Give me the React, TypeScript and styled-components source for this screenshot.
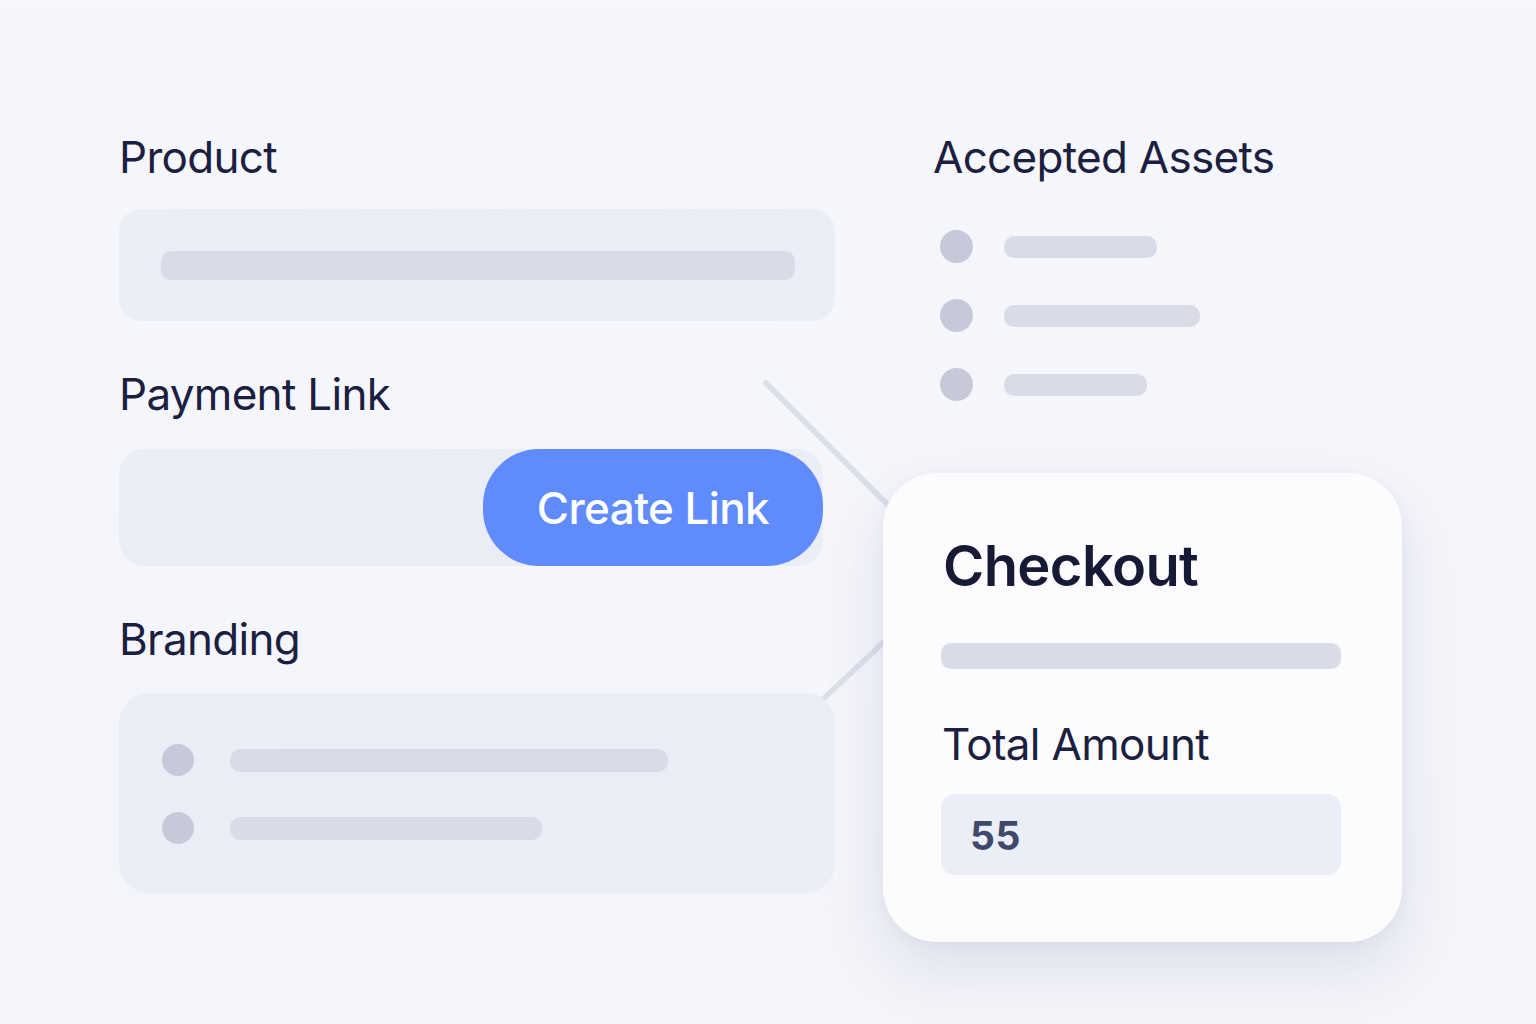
import React from "react";
import styled, { createGlobalStyle } from "styled-components";

const GlobalStyle = createGlobalStyle`
  html, body { margin: 0; padding: 0; background: #f5f6fb; }
  * { box-sizing: border-box; }
`;

const Page = styled.div`
  position: relative;
  width: 1536px;
  height: 1024px;
  overflow: hidden;
  background: linear-gradient(180deg, #f6f7fc 0%, #f4f5fa 100%);
  font-family: Inter, "Noto Sans", sans-serif;
  color: #1c2040;
  display: flex;
  align-items: flex-start;
  gap: 48px;
  padding: 135px 0 0 119px;
`;

const Connectors = styled.svg`
  position: absolute;
  inset: 0;
  width: 1536px;
  height: 1024px;
  z-index: 0;
  pointer-events: none;
`;

const Column = styled.div<{ $width: number }>`
  position: relative;
  z-index: 1;
  width: ${(p) => p.$width}px;
  display: flex;
  flex-direction: column;
`;

const Section = styled.section`
  display: flex;
  flex-direction: column;
  & + & { margin-top: 51px; }
`;

const Label = styled.h2<{ $indent?: number; $below?: number }>`
  margin: 0 0 ${(p) => p.$below ?? 30}px ${(p) => p.$indent ?? 0}px;
  font-size: 44px;
  line-height: 44px;
  font-weight: 400;
  letter-spacing: -0.7px;
  color: #1c2040;
`;

const Field = styled.div<{ $height: number; $radius: number }>`
  height: ${(p) => p.$height}px;
  border-radius: ${(p) => p.$radius}px;
  background: linear-gradient(135deg, #eceef7 0%, #eaecf6 60%, #eceef7 100%);
`;

const ProductField = styled(Field)`
  display: flex;
  align-items: center;
  padding: 0 40px 0 42px;
`;

const Bar = styled.div<{ $width?: number; $height: number }>`
  width: ${(p) => (p.$width ? `${p.$width}px` : "100%")};
  height: ${(p) => p.$height}px;
  border-radius: ${(p) => Math.min(p.$height / 2, 10)}px;
  background: #d9dce7;
  flex-shrink: 0;
`;

const LinkRow = styled(Field)`
  width: 704px;
  display: flex;
  justify-content: flex-end;
`;

const CreateButton = styled.button`
  width: 340px;
  height: 117px;
  border: none;
  border-radius: 56px;
  background: #5f8bfc;
  color: #ffffff;
  font-family: Inter, "Noto Sans", sans-serif;
  font-size: 44px;
  font-weight: 500;
  letter-spacing: -0.6px;
  cursor: pointer;
`;

const BrandingField = styled(Field)`
  display: flex;
  flex-direction: column;
  justify-content: center;
  gap: 36px;
  padding: 2px 0 0 43px;
`;

const ListRow = styled.div<{ $gap: number }>`
  display: flex;
  align-items: center;
  gap: ${(p) => p.$gap}px;
`;

const Dot = styled.span<{ $size: number }>`
  width: ${(p) => p.$size}px;
  height: ${(p) => p.$size}px;
  border-radius: 50%;
  background: #c6c9d8;
  flex-shrink: 0;
`;

const AssetList = styled.div`
  display: flex;
  flex-direction: column;
  gap: 36px;
  margin: 21px 0 0 57px;
`;

const CheckoutCard = styled.div`
  margin-top: 72px;
  width: 519px;
  height: 469px;
  border-radius: 54px;
  background: #fcfcfe;
  box-shadow: 0 26px 60px rgba(70, 80, 140, 0.13), 0 4px 14px rgba(70, 80, 140, 0.05);
  padding: 64px 61px 0 58px;
  display: flex;
  flex-direction: column;
`;

const CardTitle = styled.h1`
  margin: 0 0 48px 2px;
  font-size: 56px;
  line-height: 58px;
  font-weight: 600;
  letter-spacing: -0.6px;
  color: #161a36;
`;

const CardLabel = styled.div`
  margin: 53px 0 28px 1px;
  font-size: 44px;
  line-height: 44px;
  font-weight: 400;
  letter-spacing: -0.7px;
  color: #1c2040;
`;

const AmountBox = styled.div`
  height: 81px;
  border-radius: 14px;
  background: #eceef7;
  display: flex;
  align-items: center;
  padding: 2px 0 0 29px;
  font-size: 39px;
  font-weight: 700;
  color: #3e4a6b;
  letter-spacing: 0.5px;
`;

const assets = [153, 196, 143];
const brandRows = [438, 312];

export default function App() {
  return (
    <>
      <GlobalStyle />
      <Page>
        <Connectors viewBox="0 0 1536 1024">
          <line x1="766" y1="383" x2="890" y2="507" stroke="#dcdfea" strokeWidth="5.5" strokeLinecap="round" />
          <line x1="820" y1="702" x2="886" y2="640" stroke="#dcdfea" strokeWidth="5.5" strokeLinecap="round" />
        </Connectors>

        <Column $width={716}>
          <Section>
            <Label>Product</Label>
            <ProductField $height={112} $radius={22}>
              <Bar $height={29} />
            </ProductField>
          </Section>

          <Section>
            <Label $below={33}>Payment Link</Label>
            <LinkRow $height={117} $radius={26}>
              <CreateButton>Create Link</CreateButton>
            </LinkRow>
          </Section>

          <Section>
            <Label $below={32}>Branding</Label>
            <BrandingField $height={200} $radius={30}>
              {brandRows.map((w) => (
                <ListRow key={w} $gap={36}>
                  <Dot $size={32} />
                  <Bar $width={w} $height={23} />
                </ListRow>
              ))}
            </BrandingField>
          </Section>
        </Column>

        <Column $width={519}>
          <Label $indent={50}>Accepted Assets</Label>
          <AssetList>
            {assets.map((w) => (
              <ListRow key={w} $gap={31}>
                <Dot $size={33} />
                <Bar $width={w} $height={22} />
              </ListRow>
            ))}
          </AssetList>

          <CheckoutCard>
            <CardTitle>Checkout</CardTitle>
            <Bar $height={26} />
            <CardLabel>Total Amount</CardLabel>
            <AmountBox>55</AmountBox>
          </CheckoutCard>
        </Column>
      </Page>
    </>
  );
}
